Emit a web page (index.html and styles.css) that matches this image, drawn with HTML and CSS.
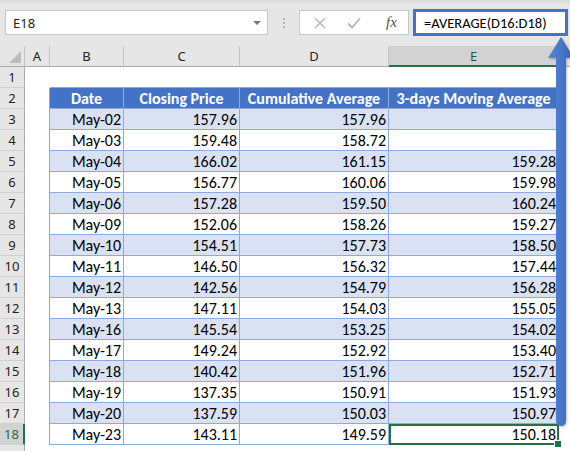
FILE: index.html
```html
<!DOCTYPE html>
<html>
<head>
<meta charset="utf-8">
<link rel="stylesheet" href="styles.css">
</head>
<body>
<div class="app">
  <div class="bar">
    <div class="namebox"><span>E18</span><span class="dd"></span></div>
    <div class="sep"><i></i><i></i><i></i></div>
    <div class="fxbox">
      <svg class="ic" width="12" height="12" viewBox="0 0 12 12"><path d="M1 1L11 11M11 1L1 11" stroke="#b4b4b4" stroke-width="1.4" fill="none"/></svg>
      <svg class="ic" width="14" height="12" viewBox="0 0 14 12"><path d="M1 6.5L5 10.5L13 1.5" stroke="#b4b4b4" stroke-width="1.8" fill="none"/></svg>
      <span class="fx">fx</span>
    </div>
    <div class="formula">=AVERAGE(D16:D18)</div>
  </div>
  <table class="sheet">
    <colgroup>
      <col class="c-rh"><col class="c-a"><col class="c-b"><col class="c-c"><col class="c-d"><col class="c-e"><col class="c-f">
    </colgroup>
    <tr class="colhdr">
      <th class="corner"><span class="tri"></span></th><th>A</th><th>B</th><th>C</th><th>D</th><th class="sel">E</th><th></th>
    </tr>
    <tr><th class="rh">1</th><td></td><td class="top"></td><td class="top"></td><td class="top"></td><td class="top"></td><td></td></tr>
    <tr class="thead"><th class="rh">2</th><td class="lb"></td><td class="t">Date</td><td class="t">Closing Price</td><td class="t">Cumulative Average</td><td class="t">3-days Moving Average</td><td></td></tr>
    <tr class="band"><th class="rh">3</th><td class="lb"></td><td class="t">May-02</td><td class="t">157.96</td><td class="t">157.96</td><td class="t"></td><td></td></tr>
    <tr><th class="rh">4</th><td class="lb"></td><td class="t">May-03</td><td class="t">159.48</td><td class="t">158.72</td><td class="t"></td><td></td></tr>
    <tr class="band"><th class="rh">5</th><td class="lb"></td><td class="t">May-04</td><td class="t">166.02</td><td class="t">161.15</td><td class="t">159.28</td><td></td></tr>
    <tr><th class="rh">6</th><td class="lb"></td><td class="t">May-05</td><td class="t">156.77</td><td class="t">160.06</td><td class="t">159.98</td><td></td></tr>
    <tr class="band"><th class="rh">7</th><td class="lb"></td><td class="t">May-06</td><td class="t">157.28</td><td class="t">159.50</td><td class="t">160.24</td><td></td></tr>
    <tr><th class="rh">8</th><td class="lb"></td><td class="t">May-09</td><td class="t">152.06</td><td class="t">158.26</td><td class="t">159.27</td><td></td></tr>
    <tr class="band"><th class="rh">9</th><td class="lb"></td><td class="t">May-10</td><td class="t">154.51</td><td class="t">157.73</td><td class="t">158.50</td><td></td></tr>
    <tr><th class="rh">10</th><td class="lb"></td><td class="t">May-11</td><td class="t">146.50</td><td class="t">156.32</td><td class="t">157.44</td><td></td></tr>
    <tr class="band"><th class="rh">11</th><td class="lb"></td><td class="t">May-12</td><td class="t">142.56</td><td class="t">154.79</td><td class="t">156.28</td><td></td></tr>
    <tr><th class="rh">12</th><td class="lb"></td><td class="t">May-13</td><td class="t">147.11</td><td class="t">154.03</td><td class="t">155.05</td><td></td></tr>
    <tr class="band"><th class="rh">13</th><td class="lb"></td><td class="t">May-16</td><td class="t">145.54</td><td class="t">153.25</td><td class="t">154.02</td><td></td></tr>
    <tr><th class="rh">14</th><td class="lb"></td><td class="t">May-17</td><td class="t">149.24</td><td class="t">152.92</td><td class="t">153.40</td><td></td></tr>
    <tr class="band"><th class="rh">15</th><td class="lb"></td><td class="t">May-18</td><td class="t">140.42</td><td class="t">151.96</td><td class="t">152.71</td><td></td></tr>
    <tr><th class="rh">16</th><td class="lb"></td><td class="t">May-19</td><td class="t">137.35</td><td class="t">150.91</td><td class="t">151.93</td><td></td></tr>
    <tr class="band"><th class="rh">17</th><td class="lb"></td><td class="t">May-20</td><td class="t">137.59</td><td class="t">150.03</td><td class="t">150.97</td><td></td></tr>
    <tr><th class="rh selrow">18</th><td class="lb"></td><td class="t">May-23</td><td class="t">143.11</td><td class="t">149.59</td><td class="t active">150.18<span class="handle"></span></td><td></td></tr>
    <tr><th class="rh">19</th><td></td><td></td><td></td><td></td><td></td><td></td></tr>
  </table>
  <svg class="arrow" width="30" height="396" viewBox="0 0 30 396">
    <defs>
      <linearGradient id="sh" x1="0" x2="1" y1="0" y2="0">
        <stop offset="0" stop-color="#5b86d6"/>
        <stop offset="0.6" stop-color="#4472c4"/>
        <stop offset="1" stop-color="#3560ad"/>
      </linearGradient>
    </defs>
    <path d="M15 1L28 22L20 22L20 384Q20 390 15 390Q10 390 10 384L10 22L2 22Z" fill="url(#sh)"/>
  </svg>
</div>
</body>
</html>
```

FILE: styles.css
```css
html, body {
  margin: 0;
  padding: 0;
  background: #e6e6e6;
  overflow: hidden;
}
.app {
  position: relative;
  width: 570px;
  height: 451px;
  overflow: hidden;
  background: #e6e6e6;
}
.bar {
  height: 46px;
  box-sizing: border-box;
  padding: 10px 0 0 5px;
  display: flex;
  align-items: flex-start;
  background: linear-gradient(#d9d9d9 0, #e6e6e6 4px);
}
.namebox {
  width: 263px;
  height: 25px;
  box-sizing: border-box;
  background: #fff;
  border: 1px solid #c6c6c6;
  display: flex;
  align-items: center;
  justify-content: space-between;
  padding: 0 6px 0 7px;
  font-family: "Noto Sans", "Open Sans", sans-serif;
  font-size: 13px;
  color: #222;
}
.dd {
  width: 0;
  height: 0;
  border-left: 4px solid transparent;
  border-right: 4px solid transparent;
  border-top: 4px solid #777;
}
.sep {
  width: 31px;
  height: 25px;
  display: flex;
  flex-direction: column;
  align-items: center;
  justify-content: center;
  gap: 2px;
}
.sep i {
  display: block;
  width: 2px;
  height: 2px;
  background: #b5b5b5;
}
.fxbox {
  width: 110px;
  height: 25px;
  box-sizing: border-box;
  background: #fff;
  border: 1px solid #c6c6c6;
  display: flex;
  align-items: center;
  padding-left: 14px;
  gap: 21px;
}
.fx {
  font-family: "Liberation Serif", serif;
  font-style: italic;
  font-size: 15px;
  color: #555;
  margin-left: 4px;
}
.formula {
  margin-left: 4px;
  margin-top: -1px;
  width: 155px;
  height: 27px;
  box-sizing: border-box;
  border: 3px solid #4472c4;
  background: #fff;
  padding-left: 8px;
  display: flex;
  align-items: center;
  font-family: Carlito, Lato, sans-serif;
  font-size: 14.5px;
  color: #000;
  white-space: nowrap;
  overflow: hidden;
}
.sheet {
  border-collapse: separate;
  border-spacing: 0;
  table-layout: fixed;
  width: 600px;
  background: #fff;
  font-family: Carlito, Lato, sans-serif;
  font-size: 16px;
}
.c-rh { width: 25px; }
.c-a { width: 25px; }
.c-b { width: 74px; }
.c-c { width: 116px; }
.c-d { width: 149px; }
.c-e { width: 170px; }
.c-f { width: 41px; }
.colhdr th {
  height: 18px;
  box-sizing: border-box;
  background: #e6e6e6;
  border-right: 1px solid #c3c3c3;
  border-bottom: 1px solid #ababab;
  font-family: "Noto Sans", "Open Sans", sans-serif;
  font-weight: normal;
  font-size: 13px;
  line-height: 16px;
  color: #222;
  padding: 0;
  text-align: center;
}
.colhdr th.sel {
  background: #d2d2d2;
  color: #1e5a34;
  border-bottom: 2px solid #217346;
}
.corner {
  position: relative;
}
.tri {
  position: absolute;
  right: 3px;
  bottom: 3px;
  width: 0;
  height: 0;
  border-left: 12px solid transparent;
  border-bottom: 12px solid #bcbcbc;
}
tr {
  height: 21px;
}
th.rh {
  background: #e6e6e6;
  border-right: 1px solid #ababab;
  border-bottom: 1px solid #d0d0d0;
  font-family: "Noto Sans", "Open Sans", sans-serif;
  font-weight: normal;
  font-size: 13px;
  color: #222;
  text-align: center;
  padding: 0;
  height: 21px;
  box-sizing: border-box;
}
th.selrow {
  background: #d2d2d2;
  color: #1e6b3d;
  border-right: 2px solid #217346;
}
td {
  padding: 0 2px 0 2px;
  height: 21px;
  box-sizing: border-box;
  white-space: nowrap;
  overflow: visible;
  color: #000;
  text-align: right;
  line-height: 19px;
}
td.top {
  border-bottom: 1px solid #8ea9db;
}
td.lb {
  border-right: 1px solid #8ea9db;
}
td.t {
  border-right: 1px solid #8ea9db;
  border-bottom: 1px solid #8ea9db;
}
tr.thead td.t {
  background: #4472c4;
  color: #fff;
  font-weight: bold;
  text-align: center;
  overflow: hidden;
  padding: 0 1px;
}
tr.band td.t {
  background: #d9e1f2;
}
td.active {
  position: relative;
  outline: 2px solid #217346;
  outline-offset: -2px;
  border: 1px solid #217346;
}
.handle {
  position: absolute;
  right: -4px;
  bottom: -4px;
  width: 6px;
  height: 6px;
  background: #217346;
  border: 1px solid #fff;
}
.arrow {
  position: absolute;
  left: 546px;
  top: 36px;
  filter: drop-shadow(1px 1px 1px rgba(0,0,0,0.25));
}
```
